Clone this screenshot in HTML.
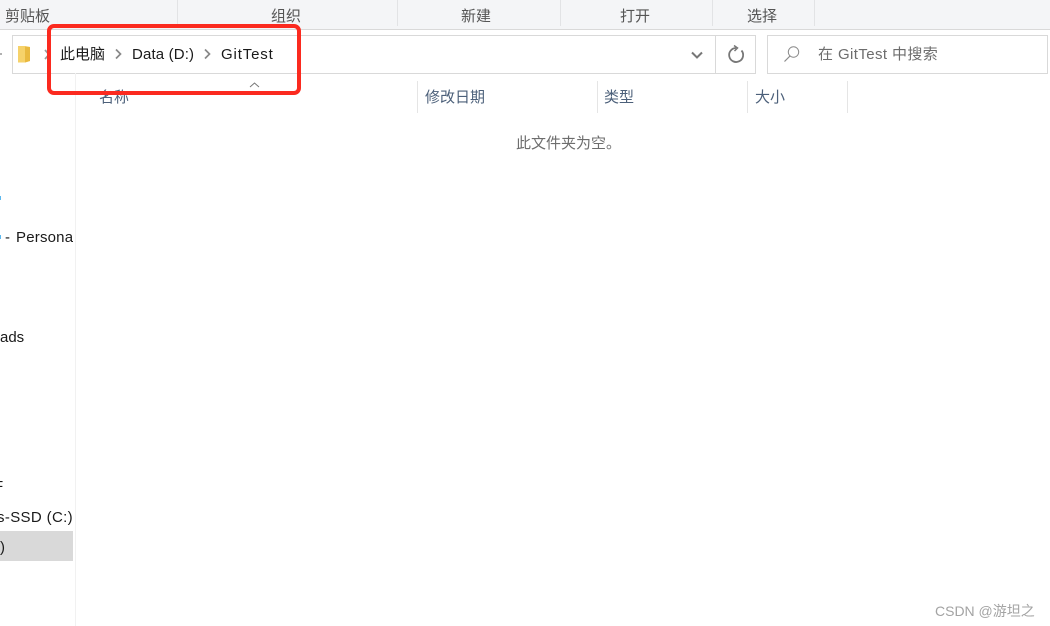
<!DOCTYPE html>
<html><head><meta charset="utf-8"><style>
html,body{margin:0;padding:0;background:#fff}
body{width:1050px;height:626px;position:relative;overflow:hidden;font-family:"Liberation Sans","Noto Sans CJK SC",sans-serif;font-size:15px;color:#222}
.a{position:absolute;white-space:nowrap;line-height:20px}
.b{position:absolute}
.r{color:#555;font-size:15px}
.h{color:#4c607a;font-size:15px}
</style></head><body>
<div class="b" style="left:0;top:0;width:1050px;height:29px;background:#f4f5f7;border-bottom:1px solid #d9d9d9"></div>
<div class="b" style="left:177px;top:0;width:1px;height:26px;background:#e2e3e5"></div>
<div class="b" style="left:397px;top:0;width:1px;height:26px;background:#e2e3e5"></div>
<div class="b" style="left:560px;top:0;width:1px;height:26px;background:#e2e3e5"></div>
<div class="b" style="left:712px;top:0;width:1px;height:26px;background:#e2e3e5"></div>
<div class="b" style="left:814px;top:0;width:1px;height:26px;background:#e2e3e5"></div>
<div class="a r" style="left:5px;top:7px">剪贴板</div>
<div class="a r" style="left:271px;top:7px">组织</div>
<div class="a r" style="left:461px;top:7px">新建</div>
<div class="a r" style="left:620px;top:7px">打开</div>
<div class="a r" style="left:747px;top:7px">选择</div>

<div class="b" style="left:12px;top:35px;width:742px;height:37px;border:1px solid #d9d9d9"></div>
<div class="b" style="left:715px;top:35px;width:1px;height:38px;background:#d9d9d9"></div>
<div class="b" style="left:767px;top:35px;width:279px;height:37px;border:1px solid #d9d9d9"></div>

<svg class="b" style="left:0;top:0" width="1050" height="626" viewBox="0 0 1050 626">
<circle cx="1" cy="54" r="1" fill="#999"/>
<path d="M18 46h7l5 1v14l-5 1.500h-7z" fill="#f6d26a"/><path d="M25 46.500l5 .5v14l-5 1.500z" fill="#e9b93f"/>
<path d="M45 50l4 4.500-4 4.500" fill="none" stroke="#9a9a9a" stroke-width="1.700"/>
<path d="M116 49.500l4.500 4.500-4.500 4.500M205 49.500l4.500 4.500-4.500 4.500" fill="none" stroke="#888" stroke-width="1.700"/>
<path d="M692 52.500l5 5 5-5" fill="none" stroke="#777" stroke-width="2"/>
<path d="M741.500 50.500a7 7 0 1 1-5.500-2.500" fill="none" stroke="#777" stroke-width="1.800"/><path d="M734 45.500l3.500 2.500-3 3" fill="none" stroke="#777" stroke-width="1.500"/>
<circle cx="793.500" cy="52" r="5.200" fill="none" stroke="#8a8a8a" stroke-width="1"/><path d="M790 56l-5.500 5.500" stroke="#8a8a8a" stroke-width="1.200" fill="none"/>
<path d="M250 87l4.500-4 4.500 4" fill="none" stroke="#777" stroke-width="1"/>
</svg>

<div class="a" style="left:60px;top:45px;color:#1a1a1a">此电脑</div>
<div class="a" style="left:132px;top:45px;color:#1a1a1a;font-size:15px;letter-spacing:.15px">Data (D:)</div>
<div class="a" style="left:221px;top:45px;color:#1a1a1a;letter-spacing:.85px">GitTest</div>
<div class="a" style="left:818px;top:45px;color:#6d6d6d;letter-spacing:.4px">在 GitTest 中搜索</div>

<div class="b" style="left:75px;top:73px;width:1px;height:553px;background:#f1f1f1"></div>
<div class="b" style="left:417px;top:81px;width:1px;height:32px;background:#e5e5e5"></div>
<div class="b" style="left:597px;top:81px;width:1px;height:32px;background:#e5e5e5"></div>
<div class="b" style="left:747px;top:81px;width:1px;height:32px;background:#e5e5e5"></div>
<div class="b" style="left:847px;top:81px;width:1px;height:32px;background:#e5e5e5"></div>
<div class="a h" style="left:99px;top:88px">名称</div>
<div class="a h" style="left:425px;top:88px">修改日期</div>
<div class="a h" style="left:604px;top:88px">类型</div>
<div class="a h" style="left:755px;top:88px">大小</div>
<div class="a" style="left:516px;top:134px;color:#6d6d6d">此文件夹为空。</div>

<div class="a" style="left:16px;top:228px;color:#1a1a1a;width:57px;overflow:hidden;letter-spacing:.2px">Personal</div>
<div class="a" style="left:5px;top:228px;color:#1a1a1a">-</div>
<div class="b" style="left:0;top:196px;width:1px;height:4px;background:#5cb8ee"></div>
<div class="b" style="left:0;top:235px;width:1px;height:4px;background:#5cb8ee"></div>
<div class="a" style="left:0;top:328px;color:#1a1a1a">ads</div>
<div class="a" style="left:-6px;top:477px;color:#1a1a1a">F</div>
<div class="b" style="left:0;top:531px;width:73px;height:30px;background:#d9d9d9"></div>
<div class="a" style="right:977px;top:508px;color:#1a1a1a;letter-spacing:.35px">ws-SSD (C:)</div>
<div class="a" style="left:0;top:538px;color:#1a1a1a">)</div>

<div class="a" style="left:935px;top:601px;color:#a3a3a3;font-size:14px">CSDN @游坦之</div>

<div class="b" style="left:47px;top:24px;width:246px;height:63px;border:4px solid #fb2a1f;border-radius:7px"></div>
</body></html>
